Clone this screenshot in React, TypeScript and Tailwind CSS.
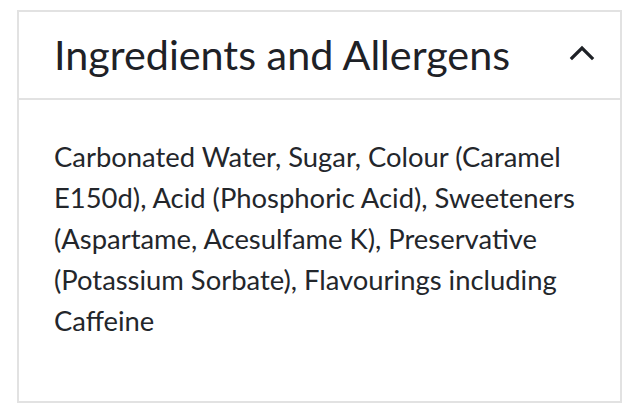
export default function App() {
  return (
    <div className="min-h-screen bg-white pt-[10px] pl-[17px]" style={{ fontFamily: "Lato, 'Noto Sans', sans-serif" }}>
      <div className="w-[605px] h-[393px] border-2 border-[#e2e2e2] bg-white">
        {/* header */}
        <div className="flex h-[88px] items-center justify-between border-b-2 border-[#e2e2e2] pl-[35px] pr-[25px]">
          <h2 className="text-[41.3px] leading-none text-[#1e2126]">Ingredients and Allergens</h2>
          <svg width="26" height="16" viewBox="0 0 26 16" fill="none" stroke="#1e2126" strokeWidth="3.2" strokeLinecap="square" className="-mt-[5px]">
            <path d="M3 13 L13 3 L23 13" />
          </svg>
        </div>

        <div className="pl-[35px] pr-[20px] pt-[36px]">
          <p className="text-[27.4px] leading-[41px] text-[#23262b]">
            Carbonated Water, Sugar, Colour (Caramel E150d), Acid (Phosphoric Acid), Sweeteners (Aspartame, Acesulfame K), Preservative (Potassium Sorbate), Flavourings including Caffeine
          </p>
        </div>
      </div>
    </div>
  );
}
